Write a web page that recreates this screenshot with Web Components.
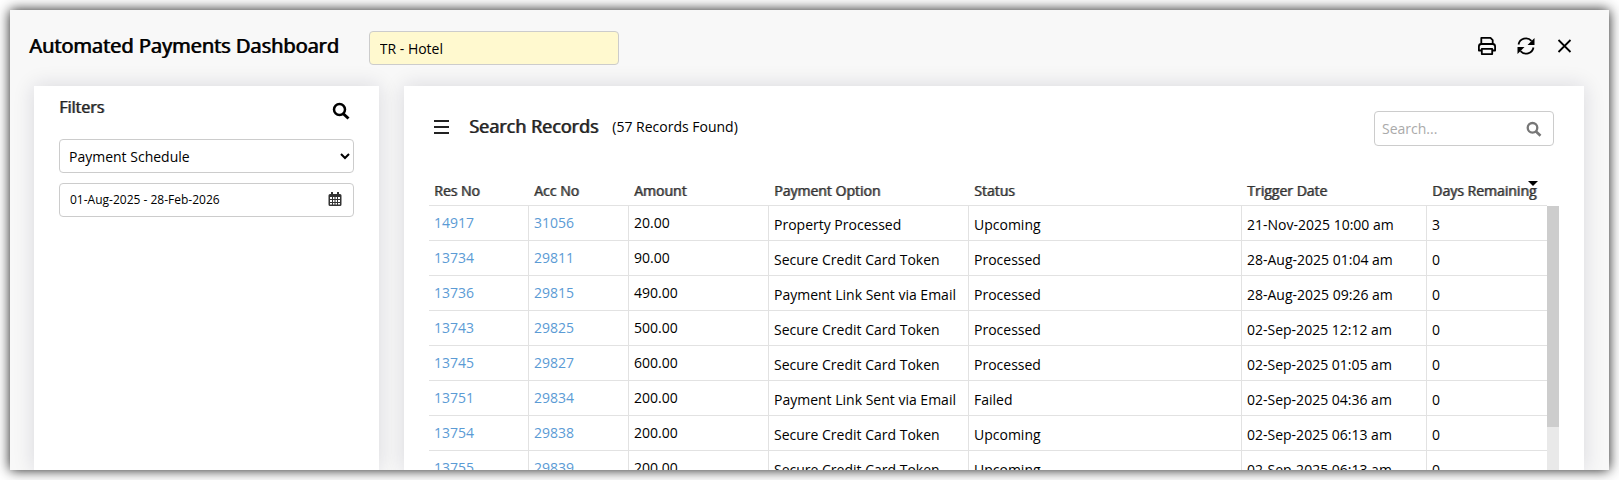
<!DOCTYPE html>
<html lang="en">
<head>
<meta charset="utf-8">
<title>Automated Payments Dashboard</title>
<style>
    body {
        margin: 0;
        background: #fff;
        color: #000;
        font-family: "Open Sans", "Noto Sans", sans-serif;
        font-size: 14px;
        line-height: 20px;
    }
</style>
</head>
<body>

<template id="pay-window-template">
    <style>
        :host {
            display: flex;
            flex-direction: column;
            box-sizing: border-box;
            height: calc(100vh - 20px);
            margin: 10px;
            overflow: hidden;
            background: #f8f8f8;
            box-shadow: 0 0 12px rgba(0, 0, 0, .9);
        }
        header {
            display: flex;
            align-items: center;
            flex: none;
            height: 76px;
            box-sizing: border-box;
            padding: 0 34px 0 19px;
        }
        h1 {
            margin: 0 30px 4px 0;
            font-size: 20px;
            line-height: 28px;
            font-weight: 400;
            text-shadow: 1px 0 rgba(0, 0, 0, .9);
        }
        .tools {
            display: flex;
            gap: 19px;
            margin: 0 0 4px auto;
        }
        .body {
            display: flex;
            flex: 1;
            gap: 25px;
            min-height: 0;
            padding: 0 25px 0 24px;
        }
    </style>
    <header>
        <h1></h1>
        <slot name="property"></slot>
        <div class="tools"><slot name="tools"></slot></div>
    </header>
    <div class="body"><slot></slot></div>
</template>

<template id="property-field-template">
    <style>
        :host { display: block; width: 250px; }
        input {
            display: block;
            box-sizing: border-box;
            width: 100%;
            height: 34px;
            padding: 0 10px;
            border: 1px solid #ccc;
            border-radius: 4px;
            background: #fff9cf;
            color: #000;
            font: inherit;
        }
    </style>
    <input type="text" aria-label="Property">
</template>

<template id="icon-button-template">
    <style>
        :host { display: block; }
        button {
            display: flex;
            align-items: center;
            justify-content: center;
            width: 20px;
            height: 20px;
            padding: 0;
            border: 0;
            background: none;
            color: inherit;
            cursor: pointer;
        }
        svg { display: block; width: 20px; height: 20px; }
    </style>
    <button type="button"></button>
</template>

<template id="filter-panel-template">
    <style>
        :host {
            display: block;
            flex: none;
            box-sizing: border-box;
            width: 345px;
            padding: 10px 25px;
            background: #fff;
            box-shadow: 0 0 20px rgba(20, 20, 60, .14);
        }
        .top {
            display: flex;
            justify-content: space-between;
            height: 43px;
        }
        .top icon-button { margin: 5px 3px 0 0; }
        h2 {
            margin: 0;
            color: #222;
            font-size: 16px;
            line-height: 22px;
            font-weight: 400;
            text-shadow: 1px 0 rgba(34, 34, 34, .7);
        }
        select, .date {
            display: flex;
            align-items: center;
            box-sizing: border-box;
            width: 100%;
            height: 34px;
            border: 1px solid #ccc;
            border-radius: 4px;
            background: #fff;
            color: #000;
        }
        select {
            margin-bottom: 10px;
            padding: 0 0 0 5px;
            font: inherit;
        }
        .date { padding: 0 8px 0 10px; }
        .date input {
            flex: 1;
            min-width: 0;
            padding: 0;
            border: 0;
            outline: 0;
            color: #000;
            font: inherit;
            font-size: 12px;
        }
        .date icon-button { color: #333; }
    </style>
    <div class="top">
        <h2>Filters</h2>
        <icon-button icon="search" label="Apply filters"></icon-button>
    </div>
    <select aria-label="Filter type"><option>Payment Schedule</option></select>
    <div class="date">
        <input type="text" aria-label="Date range" value="01-Aug-2025 - 28-Feb-2026">
        <icon-button icon="calendar" label="Pick dates"></icon-button>
    </div>
</template>

<template id="records-panel-template">
    <style>
        :host {
            display: flex;
            flex-direction: column;
            flex: 1;
            min-width: 0;
            box-sizing: border-box;
            padding: 25px 25px 0;
            background: #fff;
            box-shadow: 0 0 20px rgba(20, 20, 60, .14);
        }
        .top {
            display: flex;
            align-items: flex-start;
            flex: none;
            height: 65px;
            padding: 0 5px 0 3px;
        }
        .top > icon-button { margin: 6px 17px 0 0; color: #222; }
        h2 {
            margin: 3px 14px 0 0;
            color: #222;
            font-size: 18px;
            line-height: 24px;
            font-weight: 400;
            text-shadow: 1px 0 rgba(34, 34, 34, .8);
        }
        .count { margin-top: 6px; }
        .search {
            display: flex;
            align-items: center;
            box-sizing: border-box;
            width: 180px;
            height: 35px;
            margin-left: auto;
            padding: 0 9px 0 7px;
            border: 1px solid #ccc;
            border-radius: 4px;
        }
        .search input {
            flex: 1;
            min-width: 0;
            padding: 0;
            border: 0;
            outline: 0;
            background: none;
            font: inherit;
        }
        .search input::placeholder { color: #aaa; }
        .search icon-button { color: #777; }
    </style>
    <div class="top">
        <icon-button icon="menu" label="Menu"></icon-button>
        <h2>Search Records</h2>
        <span class="count"></span>
        <div class="search">
            <input type="text" aria-label="Search records" placeholder="Search...">
            <icon-button icon="find" label="Search"></icon-button>
        </div>
    </div>
    <slot></slot>
</template>

<template id="payment-table-template">
    <style>
        :host {
            display: grid;
            grid-template-columns: 1fr 12px;
            flex: 1;
            min-height: 0;
            overflow: hidden;
        }
        table {
            width: 100%;
            border-collapse: separate;
            border-spacing: 0;
            table-layout: fixed;
        }
        th, td {
            box-sizing: border-box;
            padding: 0 5px;
            border-bottom: 1px solid #e2e2e2;
            text-align: left;
            white-space: nowrap;
        }
        th {
            height: 30px;
            color: #333;
            font-weight: 400;
            text-shadow: 1px 0 rgba(51, 51, 51, .7);
        }
        td {
            height: 35px;
            padding-top: 4px;
            border-right: 1px solid #e2e2e2;
        }
        /* number columns sit a little higher than the text ones */
        td:nth-child(-n+3) { padding-top: 0; }
        td:last-child { border-right: 0; }
        a { color: #5b9bd5; text-decoration: none; }
        .sort { position: relative; }
        .sort::after {
            content: "";
            position: absolute;
            top: 0;
            right: -2px;
            border: 5px solid transparent;
            border-top-color: #000;
            border-bottom: 0;
        }
        .bar {
            margin-top: 30px;
            background: #e9e9e9;
        }
        .thumb { height: 221px; background: #cdcdcd; }
    </style>
    <table>
        <colgroup>
            <col style="width: 100px"><col style="width: 100px"><col style="width: 140px">
            <col style="width: 200px"><col><col style="width: 185px"><col style="width: 120px">
        </colgroup>
        <thead>
            <tr>
                <th>Res No</th><th>Acc No</th><th>Amount</th><th>Payment Option</th>
                <th>Status</th><th>Trigger Date</th><th><span class="sort">Days Remaining</span></th>
            </tr>
        </thead>
        <tbody></tbody>
    </table>
    <div class="bar"><div class="thumb"></div></div>
</template>

<pay-window heading="Automated Payments Dashboard">
    <property-field slot="property" value="TR - Hotel"></property-field>
    <icon-button slot="tools" icon="print" label="Print"></icon-button>
    <icon-button slot="tools" icon="refresh" label="Refresh"></icon-button>
    <icon-button slot="tools" icon="close" label="Close"></icon-button>
    <filter-panel></filter-panel>
    <records-panel count="57"><payment-table></payment-table></records-panel>
</pay-window>

<script>
const ICONS = {
    print: '<g fill="none" stroke="currentColor" stroke-width="1.8" stroke-linejoin="round"><path d="M4.3 8V1.9h9.2l2.2 2.2V8"/><path d="M4.5 14.5H1.9V10.500q0-2.500 2.500-2.500h11.200q2.500 0 2.500 2.500v4h-2.600"/><path d="M4.800 12.800h10.400v5.300H4.800z"/></g>',
    refresh: '<g fill="none" stroke="currentColor" stroke-width="1.800"><path d="M2.500 8.500A7.600 7.600 0 0 1 15.500 4.800M17.500 11.500A7.600 7.600 0 0 1 4.500 15.200"/></g><path fill="currentColor" d="M18.500 2v7h-7zM1.500 18v-7h7z"/>',
    close: '<path d="M3.500 4l12 12M15.500 4L3.500 16" fill="none" stroke="currentColor" stroke-width="1.800"/>',
    search: '<path d="M12 12.500l5.500 5" stroke="currentColor" stroke-width="3"/><circle cx="8.500" cy="8.500" r="5.500" fill="none" stroke="currentColor" stroke-width="2.500"/>',
    find: '<path d="M11.500 12l5 4.700" stroke="currentColor" stroke-width="2.600"/><circle cx="8.500" cy="8.800" r="4.800" fill="none" stroke="currentColor" stroke-width="2.300"/>',
    calendar: '<path fill="currentColor" fill-rule="evenodd" d="M5 4h1V2h2v2h4V2h2v2h1q1.500 0 1.500 1.500v9q0 1.500-1.500 1.500H5q-1.500 0-1.500-1.500v-9Q3.500 4 5 4zM5 7v2h2V7zM8 7v2h1.500V7zM10.500 7v2H12V7zM13 7v2h2V7zM5 10v2h2v-2zM8 10v2h1.500v-2zM10.500 10v2H12v-2zM13 10v2h2v-2zM5 13v1.500h2V13zM8 13v1.500h1.500V13zM10.500 13v1.500H12V13zM13 13v1.500h2V13z"/>',
    menu: '<path d="M2 4h15M2 10h15M2 16h15" stroke="currentColor" stroke-width="2"/>'
};

const PAYMENTS = [
    ['14917', '31056', '20.00', 'Property Processed', 'Upcoming', '21-Nov-2025 10:00 am', '3'],
    ['13734', '29811', '90.00', 'Secure Credit Card Token', 'Processed', '28-Aug-2025 01:04 am', '0'],
    ['13736', '29815', '490.00', 'Payment Link Sent via Email', 'Processed', '28-Aug-2025 09:26 am', '0'],
    ['13743', '29825', '500.00', 'Secure Credit Card Token', 'Processed', '02-Sep-2025 12:12 am', '0'],
    ['13745', '29827', '600.00', 'Secure Credit Card Token', 'Processed', '02-Sep-2025 01:05 am', '0'],
    ['13751', '29834', '200.00', 'Payment Link Sent via Email', 'Failed', '02-Sep-2025 04:36 am', '0'],
    ['13754', '29838', '200.00', 'Secure Credit Card Token', 'Upcoming', '02-Sep-2025 06:13 am', '0'],
    ['13755', '29839', '200.00', 'Secure Credit Card Token', 'Upcoming', '02-Sep-2025 06:13 am', '0']
];

// clones <template id="[tag]-template"> into an open shadow root
class TemplateElement extends HTMLElement {
    constructor(){
        super();
        const template = document.querySelector('#' + this.localName + '-template');
        this.attachShadow({mode: 'open'}).appendChild(template.content.cloneNode(true));
    }

    find(selector){
        return this.shadowRoot.querySelector(selector);
    }
}

class IconButton extends TemplateElement {
    connectedCallback(){
        const button = this.find('button');
        button.setAttribute('aria-label', this.getAttribute('label'));
        button.innerHTML = '<svg viewBox="0 0 20 20" aria-hidden="true">' + ICONS[this.getAttribute('icon')] + '</svg>';
    }
}

class PropertyField extends TemplateElement {
    connectedCallback(){
        this.find('input').value = this.getAttribute('value');
    }
}

class PayWindow extends TemplateElement {
    connectedCallback(){
        this.find('h1').textContent = this.getAttribute('heading');
    }
}

class FilterPanel extends TemplateElement {}

class RecordsPanel extends TemplateElement {
    connectedCallback(){
        this.find('.count').textContent = '(' + this.getAttribute('count') + ' Records Found)';
    }
}

class PaymentTable extends TemplateElement {
    connectedCallback(){
        this.find('tbody').innerHTML = PAYMENTS.map(row => '<tr>' + row.map((value, i) =>
            '<td>' + (i < 2 ? '<a href="#' + value + '">' + value + '</a>' : value) + '</td>'
        ).join('') + '</tr>').join('');
    }
}

customElements.define('icon-button', IconButton);
customElements.define('property-field', PropertyField);
customElements.define('pay-window', PayWindow);
customElements.define('filter-panel', FilterPanel);
customElements.define('records-panel', RecordsPanel);
customElements.define('payment-table', PaymentTable);
</script>
</body>
</html>
